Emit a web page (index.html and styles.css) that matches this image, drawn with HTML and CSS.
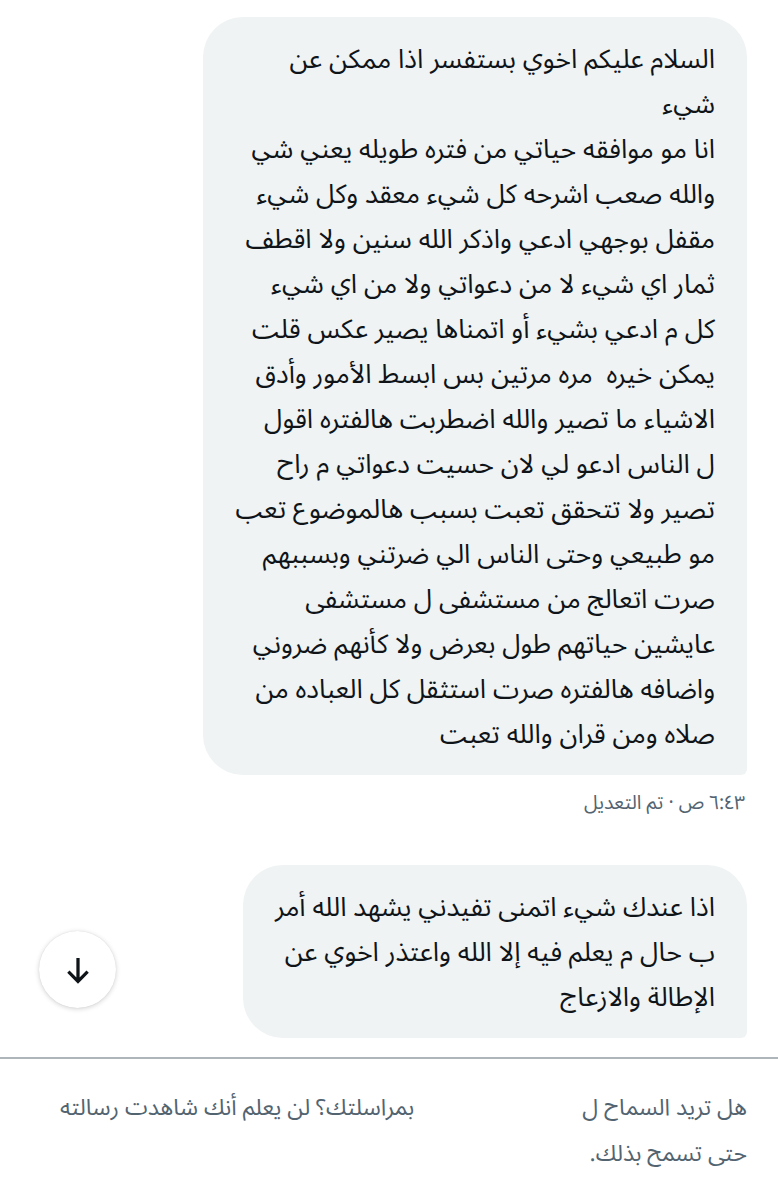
FILE: index.html
```html
<!DOCTYPE html>
<html lang="ar" dir="rtl">
<head>
<meta charset="utf-8">
<link rel="stylesheet" href="styles.css">
</head>
<body>
<main class="chat">
  <div class="msg">
    <div class="bubble first">السلام عليكم اخوي بستفسر اذا ممكن عن<br>شيء<br>انا مو موافقه حياتي من فتره طويله يعني شي<br><span class="plain">والله</span> صعب اشرحه كل شيء معقد وكل شيء<br>مقفل بوجهي ادعي واذكر <span class="plain">الله</span> سنين ولا اقطف<br>ثمار اي شيء لا من دعواتي ولا من اي شيء<br>كل م ادعي بشيء أو اتمناها يصير عكس قلت<br>يمكن خيره&nbsp; مره مرتين بس ابسط الأمور وأدق<br>الاشياء ما تصير <span class="plain">والله</span> اضطربت هالفتره اقول<br>ل الناس ادعو لي لان حسيت دعواتي م راح<br>تصير ولا تتحقق تعبت بسبب هالموضوع تعب<br>مو طبيعي وحتى الناس الي ضرتني وبسببهم<br>صرت اتعالج من مستشفى ل مستشفى<br>عايشين حياتهم طول بعرض ولا كأنهم ضروني<br>واضافه هالفتره صرت استثقل كل العباده من<br>صلاه ومن قران <span class="plain">والله</span> تعبت</div>
    <div class="meta">٦:٤٣ ص · تم التعديل</div>
  </div>
  <div class="msg">
    <div class="bubble second">اذا عندك شيء اتمنى تفيدني يشهد <span class="plain">الله</span> أمر<br>ب حال م يعلم فيه إلا <span class="plain">الله</span> واعتذر اخوي عن<br>الإطالة والازعاج</div>
  </div>
  <button class="scroll-down" aria-label="scroll down">
    <svg viewBox="0 0 24 24" width="34" height="34"><path d="M12 3.5v16.5M5.2 13.2l6.8 6.8 6.8-6.8" fill="none" stroke="#0f1419" stroke-width="2.3"/></svg>
  </button>
</main>
<footer class="request">
  <p>هل تريد السماح ل<span class="redact"></span>بمراسلتك؟ لن يعلم أنك شاهدت رسالته<br>حتى تسمح بذلك.</p>
</footer>
</body>
</html>
```
FILE: styles.css
```css
html, body {
  margin: 0;
  background: #ffffff;
}
body {
  font-family: "Noto Sans Arabic UI", "Noto Sans Arabic", "Noto Sans", "DejaVu Sans", sans-serif;
  color: #0f1419;
  width: 778px;
}
.chat {
  position: relative;
  padding: 17px 31px 0 31px;
  height: 1040px;
}
.msg {
  display: flex;
  flex-direction: column;
  align-items: flex-start;
}
.bubble {
  background: #eff3f4;
  font-size: 26.5px;
  line-height: 45px;
  padding: 19px 32px;
  border-radius: 40px 40px 6px 40px;
  white-space: nowrap;
}
.plain {
  font-feature-settings: "liga" 0, "dlig" 0, "rlig" 0;
}
.meta {
  font-size: 19.5px;
  color: #536471;
  margin-top: 12px;
  padding-right: 2px;
  line-height: 30px;
}
.msg + .msg {
  margin-top: 48px;
}
.scroll-down {
  position: absolute;
  left: 39px;
  top: 931px;
  width: 77px;
  height: 77px;
  border-radius: 50%;
  border: none;
  background: #ffffff;
  box-shadow: 0 1px 5px rgba(0,0,0,0.18), 0 0 1px rgba(0,0,0,0.12);
  display: flex;
  align-items: center;
  justify-content: center;
  padding: 0;
}
.request {
  border-top: 2px solid #aeb6ba;
  padding: 24px 31px 0 31px;
}
.request p {
  margin: 0;
  font-size: 23px;
  line-height: 46px;
  color: #536471;
  white-space: nowrap;
}
.redact {
  display: inline-block;
  width: 168px;
  height: 1px;
}
```
